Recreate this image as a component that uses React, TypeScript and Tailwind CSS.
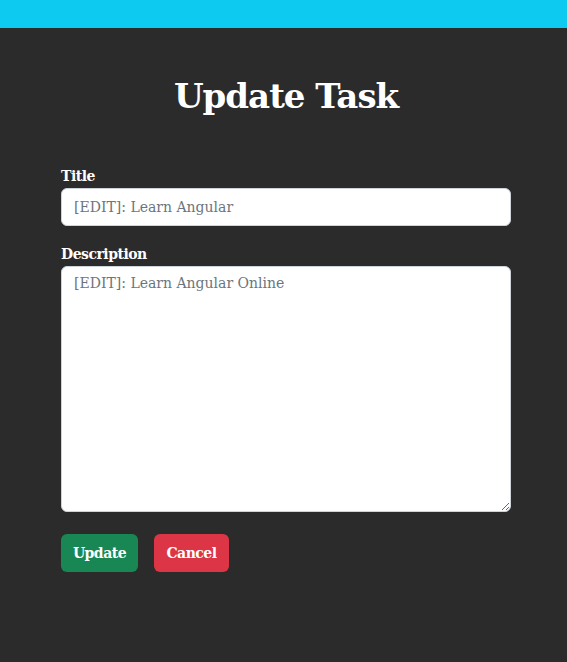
export default function App() {
  return (
    <div className="min-h-[662px] bg-[#2b2b2b] font-['DejaVu_Serif',serif]">
      <div className="h-[28px] bg-[#0dcaf0]" />
      <div className="ml-[61px] w-[450px] pt-[44px]">
        <h1 className="text-center text-[34px] leading-[48px] text-white font-bold tracking-[-1px]">
          Update Task
        </h1>
        <form className="mt-[44px] flex flex-col" onSubmit={(e) => e.preventDefault()}>
          <label className="text-[14px] leading-[24px] font-bold text-white tracking-[-0.5px]">Title</label>
          <input
            type="text"
            placeholder="[EDIT]: Learn Angular"
            className="h-[38px] w-full rounded-[6px] border border-[#ced4da] bg-white px-3 text-[14px] text-[#212529] placeholder:text-[#6c757d] outline-none"
          />
          <label className="mt-[16px] text-[14px] leading-[24px] font-bold text-white tracking-[-0.5px]">
            Description
          </label>
          <textarea
            placeholder="[EDIT]: Learn Angular Online"
            className="h-[246px] w-full rounded-[6px] border border-[#ced4da] bg-white px-3 py-[6px] text-[14px] text-[#212529] placeholder:text-[#6c757d] outline-none"
          />
          <div className="mt-[22px] flex gap-[16px]">
            <button className="h-[38px] w-[77px] rounded-[6px] bg-[#198754] text-[14px] font-bold text-white tracking-[-0.5px]">
              Update
            </button>
            <button className="h-[38px] w-[75px] rounded-[6px] bg-[#dc3545] text-[14px] font-bold text-white tracking-[-0.5px]">
              Cancel
            </button>
          </div>
        </form>
      </div>
    </div>
  );
}
